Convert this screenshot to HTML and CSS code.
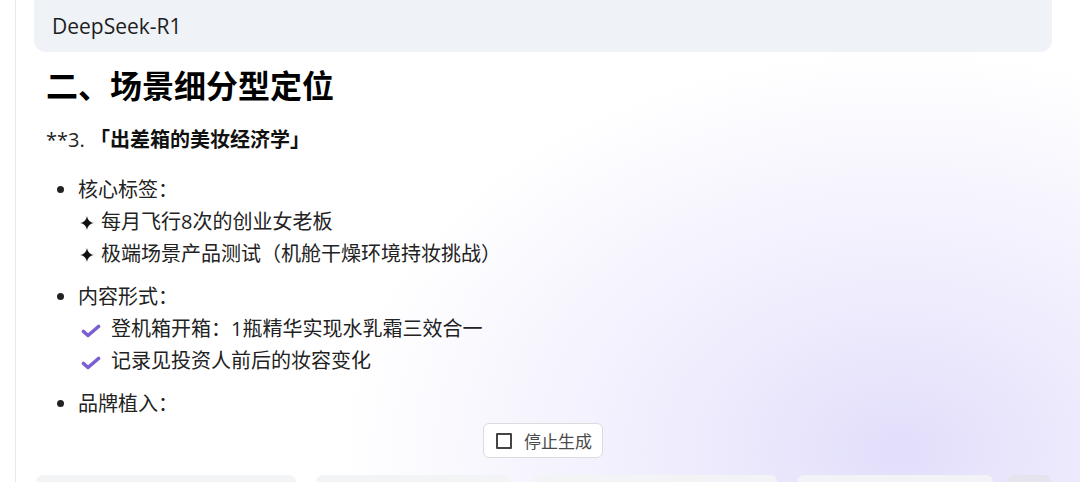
FILE: index.html
```html
<!DOCTYPE html>
<html lang="zh-CN">
<head>
  <meta charset="UTF-8" />
  <meta name="viewport" content="width=device-width, initial-scale=1.0"/>
  <title>DeepSeek-R1</title>
  <link rel="stylesheet" href="styles.css">
</head>
<body>

<div class="chat">
  <div class="model-bar">DeepSeek-R1</div>

  <div class="answer">
    <h2>二、场景细分型定位</h2>
    <p class="sub">**3. <strong>「出差箱的美妆经济学」</strong></p>

    <ul class="points">
      <li>
        核心标签：<br>
        <span class="line"><svg class="star" viewBox="0 0 14 14"><path d="M7 0 C7.8 4.2 9.8 6.2 14 7 C9.8 7.8 7.8 9.8 7 14 C6.2 9.8 4.2 7.8 0 7 C4.2 6.2 6.2 4.2 7 0 Z"/></svg>每月飞行8次的创业女老板</span><br>
        <span class="line"><svg class="star" viewBox="0 0 14 14"><path d="M7 0 C7.8 4.2 9.8 6.2 14 7 C9.8 7.8 7.8 9.8 7 14 C6.2 9.8 4.2 7.8 0 7 C4.2 6.2 6.2 4.2 7 0 Z"/></svg>极端场景产品测试（机舱干燥环境持妆挑战）</span>
      </li>
      <li>
        内容形式：<br>
        <span class="line"><svg class="check" viewBox="0 0 20 14"><path d="M2.5 7.5 L7 11.5 L17.5 2.5"/></svg>登机箱开箱：1瓶精华实现水乳霜三效合一</span><br>
        <span class="line"><svg class="check" viewBox="0 0 20 14"><path d="M2.5 7.5 L7 11.5 L17.5 2.5"/></svg>记录见投资人前后的妆容变化</span>
      </li>
      <li>品牌植入：</li>
    </ul>
  </div>

  <div class="stop-row">
    <button class="stop"><span class="stop-icon"></span>停止生成</button>
  </div>

  <div class="cards">
    <div class="card w1"></div>
    <div class="card w2"></div>
    <div class="card w3"></div>
    <div class="card w4"></div>
    <div class="card more"></div>
  </div>
</div>

</body>
</html>
```

FILE: styles.css
```css
html, body {
  margin: 0;
  padding: 0;
  height: 100%;
  overflow: hidden;
  color: #222;
  font-family: 'Open Sans', 'Noto Sans CJK SC', sans-serif;
  background:
    radial-gradient(ellipse 560px 400px at 900px 450px, #e2defb 0%, rgba(232, 229, 252, 0.7) 40%, rgba(255, 255, 255, 0) 100%),
    #fff;
}
.chat {
  box-sizing: border-box;
  margin-left: 15px;
  height: 100%;
  border-left: 1px solid #e8e8ea;
  padding: 0 28px 0 18px;
  display: flex;
  flex-direction: column;
}
.model-bar {
  flex: none;
  height: 52px;
  line-height: 52px;
  padding: 0 18px;
  background: #eff2f7;
  border-radius: 0 0 12px 12px;
  font-size: 21px;
  color: #1d1d1d;
}
.answer {
  padding-left: 12px;
}
.answer h2 {
  margin: 14px 0 0;
  font-size: 32px;
  line-height: 40px;
  font-weight: 700;
  color: #000;
}
.sub {
  margin: 17px 0 0;
  font-size: 20px;
  line-height: 33px;
  color: #222;
}
.sub strong {
  color: #111;
}
.points {
  margin: 18px 0 0;
  padding-left: 32px;
  font-size: 20px;
  line-height: 32px;
  color: #222;
}
.points li {
  margin-bottom: 11px;
}
.points li:last-child {
  margin-bottom: 0;
}
.line {
  white-space: nowrap;
}
.star {
  width: 14px;
  height: 14px;
  margin: 0 7px 0 2px;
  fill: #111;
  vertical-align: -1px;
}
.check {
  width: 20px;
  height: 14px;
  margin: 0 10px 0 3px;
  fill: none;
  stroke: #7a5fd3;
  stroke-width: 3.6;
  stroke-linecap: round;
  stroke-linejoin: round;
  vertical-align: -2px;
}
.stop-row {
  flex: none;
  display: flex;
  justify-content: center;
  margin-top: 3px;
}
.stop {
  display: flex;
  align-items: center;
  height: 35px;
  padding: 0 10px 0 12px;
  background: #fff;
  border: 1px solid #dcdcdf;
  border-radius: 6px;
  font-family: inherit;
  font-size: 17px;
  color: #4a4a4a;
}
.stop-icon {
  width: 12px;
  height: 12px;
  border: 2px solid #444;
  border-radius: 1px;
  margin-right: 12px;
}
.cards {
  flex: 1;
  min-height: 0;
  display: flex;
  margin-top: 17px;
  padding-left: 2px;
}
.card {
  background: rgba(242, 243, 246, 0.95);
  border-radius: 12px 12px 0 0;
  margin-right: 20px;
}
.w1 { width: 260px; }
.w2 { width: 195px; margin-right: 22px; }
.w3 { width: 244px; }
.w4 { width: 196px; margin-right: 14px; }
.more {
  width: 44px;
  margin-right: 0;
  background: #e4e3ee;
}
```
